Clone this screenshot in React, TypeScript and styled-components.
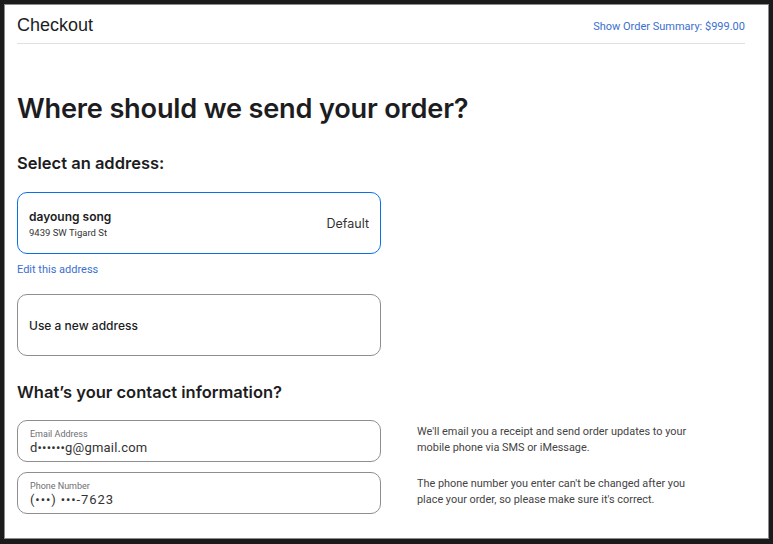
import styled, { createGlobalStyle } from "styled-components";

const GlobalStyle = createGlobalStyle`
  html, body {
    margin: 0;
    padding: 0;
    background: #1b1b1b;
  }
  body {
    font-family: Inter, "Noto Sans", sans-serif;
    color: #1d1d1f;
  }
`;

const Page = styled.div`
  width: 773px;
  height: 544px;
  padding: 4px 4px 5px 4px;
  box-sizing: border-box;
`;

const Panel = styled.div`
  height: 100%;
  box-sizing: border-box;
  background: #fff;
  border: 1px solid #8c8c8c;
  padding: 0 23px 0 12px;
  overflow: hidden;
`;

const Header = styled.header`
  display: flex;
  justify-content: space-between;
  align-items: center;
  height: 38px;
  border-bottom: 1px solid #e0e0e0;
  .title {
    font-family: "Liberation Sans", Arial, sans-serif;
    font-size: 18px;
    color: #1d1d1f;
    margin-top: 3px;
  }
  .summary {
    font-family: Roboto, "Noto Sans", sans-serif;
    font-size: 11px;
    color: #3b6fcf;
    margin-top: 4px;
  }
`;

const Heading = styled.h1`
  margin: 48px 0 0;
  font-size: 27.2px;
  font-weight: 600;
  letter-spacing: -0.2px;
  line-height: 34px;
`;

const Subheading = styled.h2<{ $top: number }>`
  margin: ${(p) => p.$top}px 0 0;
  font-size: 16.5px;
  font-weight: 600;
  line-height: 22px;
`;

const AddressCard = styled.div<{ $selected?: boolean }>`
  width: 364px;
  height: 62px;
  box-sizing: border-box;
  margin-top: 18px;
  border: ${(p) => (p.$selected ? "1.5px solid #0a72e6" : "1px solid #8e8e8e")};
  border-radius: 10px;
  padding: 0 11px 0 11px;
  display: flex;
  align-items: center;
  justify-content: space-between;
`;

const Name = styled.div`
  font-size: 12px;
  font-weight: 600;
`;

const Street = styled.div`
  font-family: Roboto, "Noto Sans", sans-serif;
  font-size: 9.5px;
  color: #333;
  margin-top: 3px;
`;

const Tag = styled.div`
  font-size: 12.5px;
  color: #333;
`;

const NewAddress = styled.div`
  font-size: 12px;
  font-weight: 500;
`;

const EditLink = styled.div`
  margin-top: 9px;
  font-family: Roboto, "Noto Sans", sans-serif;
  font-size: 11px;
  color: #3b6fcf;
`;

const ContactRow = styled.div`
  display: grid;
  grid-template-columns: 364px 290px;
  column-gap: 36px;
  row-gap: 10px;
  margin-top: 17px;
`;

const Field = styled.div`
  height: 42px;
  box-sizing: border-box;
  border: 1px solid #8e8e8e;
  border-radius: 10px;
  padding: 8px 12px 0;
  font-family: Roboto, "Noto Sans", sans-serif;
`;

const FieldLabel = styled.div`
  font-size: 9px;
  color: #6e6e73;
  line-height: 11px;
`;

const FieldValue = styled.div<{ $spacing?: number }>`
  font-size: 13px;
  color: #333;
  line-height: 16px;
  letter-spacing: ${(p) => p.$spacing ?? 0.2}px;
`;

const Note = styled.p`
  margin: 0;
  padding-top: 4px;
  font-family: Roboto, "Noto Sans", sans-serif;
  font-size: 10.9px;
  line-height: 15.5px;
  color: #444;
`;

export default function App() {
  return (
    <>
      <GlobalStyle />
      <Page>
        <Panel>
          <Header>
            <div className="title">Checkout</div>
            <div className="summary">Show Order Summary: $999.00</div>
          </Header>
          <Heading>Where should we send your order?</Heading>
          <Subheading $top={26}>Select an address:</Subheading>
          <AddressCard $selected>
            <div>
              <Name>dayoung song</Name>
              <Street>9439 SW Tigard St</Street>
            </div>
            <Tag>Default</Tag>
          </AddressCard>
          <EditLink>Edit this address</EditLink>
          <AddressCard>
            <NewAddress>Use a new address</NewAddress>
          </AddressCard>
          <Subheading $top={25}>What’s your contact information?</Subheading>
          <ContactRow>
            <Field>
              <FieldLabel>Email Address</FieldLabel>
              <FieldValue>d••••••g@gmail.com</FieldValue>
            </Field>
            <Note>
              We'll email you a receipt and send order updates to your mobile phone via SMS or
              iMessage.
            </Note>
            <Field>
              <FieldLabel>Phone Number</FieldLabel>
              <FieldValue $spacing={0.9}>(•••) •••-7623</FieldValue>
            </Field>
            <Note>
              The phone number you enter can't be changed after you place your order, so please
              make sure it's correct.
            </Note>
          </ContactRow>
        </Panel>
      </Page>
    </>
  );
}
